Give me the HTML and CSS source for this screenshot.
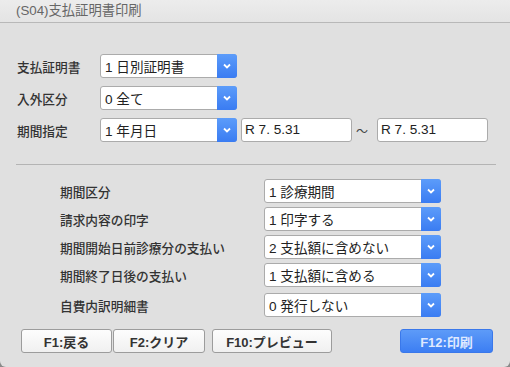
FILE: index.html
```html
<!DOCTYPE html>
<html lang="ja">
<head>
    <meta charset="UTF-8">
    <title>(S04)支払証明書印刷</title>
    <link rel="stylesheet" href="styles.css">
</head>
<body>
    <div class="window">
        <div class="titlebar">(S04)支払証明書印刷</div>

        <div class="top-form">
            <div class="row">
                <span class="label">支払証明書</span>
                <div class="select"><span>1 日別証明書</span><i class="arrow"><svg width="8" height="6" viewBox="0 0 8 6"><path d="M1 1.5 L4 4.5 L7 1.5" fill="none" stroke="#fff" stroke-width="1.8"/></svg></i></div>
            </div>
            <div class="row">
                <span class="label">入外区分</span>
                <div class="select"><span>0 全て</span><i class="arrow"><svg width="8" height="6" viewBox="0 0 8 6"><path d="M1 1.5 L4 4.5 L7 1.5" fill="none" stroke="#fff" stroke-width="1.8"/></svg></i></div>
            </div>
            <div class="row">
                <span class="label">期間指定</span>
                <div class="select"><span>1 年月日</span><i class="arrow"><svg width="8" height="6" viewBox="0 0 8 6"><path d="M1 1.5 L4 4.5 L7 1.5" fill="none" stroke="#fff" stroke-width="1.8"/></svg></i></div>
                <div class="date">R 7. 5.31</div>
                <span class="tilde">～</span>
                <div class="date">R 7. 5.31</div>
            </div>
        </div>

        <hr class="sep">

        <div class="options">
            <div class="opt">
                <span class="opt-label">期間区分</span>
                <div class="select wide"><span>1 診療期間</span><i class="arrow"><svg width="8" height="6" viewBox="0 0 8 6"><path d="M1 1.5 L4 4.5 L7 1.5" fill="none" stroke="#fff" stroke-width="1.8"/></svg></i></div>
            </div>
            <div class="opt">
                <span class="opt-label">請求内容の印字</span>
                <div class="select wide"><span>1 印字する</span><i class="arrow"><svg width="8" height="6" viewBox="0 0 8 6"><path d="M1 1.5 L4 4.5 L7 1.5" fill="none" stroke="#fff" stroke-width="1.8"/></svg></i></div>
            </div>
            <div class="opt">
                <span class="opt-label">期間開始日前診療分の支払い</span>
                <div class="select wide"><span>2 支払額に含めない</span><i class="arrow"><svg width="8" height="6" viewBox="0 0 8 6"><path d="M1 1.5 L4 4.5 L7 1.5" fill="none" stroke="#fff" stroke-width="1.8"/></svg></i></div>
            </div>
            <div class="opt">
                <span class="opt-label">期間終了日後の支払い</span>
                <div class="select wide"><span>1 支払額に含める</span><i class="arrow"><svg width="8" height="6" viewBox="0 0 8 6"><path d="M1 1.5 L4 4.5 L7 1.5" fill="none" stroke="#fff" stroke-width="1.8"/></svg></i></div>
            </div>
            <div class="opt last">
                <span class="opt-label">自費内訳明細書</span>
                <div class="select wide"><span>0 発行しない</span><i class="arrow"><svg width="8" height="6" viewBox="0 0 8 6"><path d="M1 1.5 L4 4.5 L7 1.5" fill="none" stroke="#fff" stroke-width="1.8"/></svg></i></div>
            </div>
        </div>

        <div class="buttons">
            <button class="btn f1">F1:戻る</button>
            <button class="btn f2">F2:クリア</button>
            <button class="btn f10">F10:プレビュー</button>
            <button class="btn primary">F12:印刷</button>
        </div>
    </div>
</body>
</html>
```

FILE: styles.css
```css
html {
    background-color: #8a8a8a;
}
body {
    margin: 0;
    font-family: "Liberation Sans", "Noto Sans CJK JP", sans-serif;
    color: #222;
}
.window {
    height: 367px;
    background-color: #e0e0e0;
    border-radius: 0 0 6px 6px;
    overflow: hidden;
}
.titlebar {
    height: 22px;
    line-height: 22px;
    padding-left: 16px;
    font-size: 13.3px;
    color: #666;
    background: linear-gradient(#ececec, #e4e4e4);
    border-bottom: 1px solid #b8b8b8;
}
.top-form {
    padding: 31px 0 0 17px;
    display: flex;
    flex-direction: column;
    gap: 8px;
}
.row {
    display: flex;
    align-items: center;
    height: 24px;
}
.label {
    width: 83px;
    font-family: "Noto Sans CJK JP", sans-serif;
    font-size: 12.7px;
    font-weight: 500;
    color: #333;
}
.select {
    box-sizing: border-box;
    width: 137px;
    height: 24px;
    display: flex;
    align-items: center;
    background-color: #fff;
    border: 1px solid #ababab;
    border-radius: 3px;
    font-size: 13.6px;
}
.select span {
    flex: 1;
    padding-left: 4px;
    white-space: nowrap;
}
.arrow {
    width: 20px;
    height: 24px;
    margin: -1px -1px -1px 0;
    display: flex;
    align-items: center;
    justify-content: center;
    background: linear-gradient(#5c9cfa, #3a7cf2);
    border-radius: 0 3px 3px 0;
}
.date {
    box-sizing: border-box;
    width: 111px;
    height: 24px;
    line-height: 22px;
    margin-left: 4px;
    padding-left: 3px;
    background-color: #fff;
    border: 1px solid #ababab;
    border-radius: 3px;
    font-size: 13.6px;
}
.tilde {
    width: 21px;
    margin-left: 4px;
    font-size: 12px;
    color: #444;
}
.tilde + .date {
    margin-left: 0;
}
.sep {
    margin: 22px 14px 0 16px;
    border: none;
    border-top: 1px solid #b4b4b4;
}
.options {
    padding: 14px 0 0 60px;
    display: flex;
    flex-direction: column;
    gap: 4px;
}
.opt {
    display: flex;
    align-items: center;
    height: 24px;
}
.opt.last {
    margin-top: 2px;
}
.opt-label {
    width: 204px;
    font-family: "Noto Sans CJK JP", sans-serif;
    font-size: 12.7px;
    font-weight: 500;
    color: #333;
}
.select.wide {
    width: 177px;
}
.buttons {
    display: flex;
    padding: 12px 0 0 21px;
}
.btn {
    box-sizing: border-box;
    height: 24px;
    padding: 0;
    font-family: inherit;
    font-size: 13px;
    font-weight: bold;
    color: #333;
    background: linear-gradient(#fdfdfd, #f0f0f0);
    border: 1px solid #9c9c9c;
    border-radius: 3px;
}
.f1 { width: 91px; }
.f2 { width: 92px; margin-left: 1px; }
.f10 { width: 120px; margin-left: 7px; }
.primary {
    width: 93px;
    margin-left: 68px;
    color: #dfe9ff;
    background: linear-gradient(#5d9bf8, #3c7ef3);
    border-color: #3a78ea;
}
```
